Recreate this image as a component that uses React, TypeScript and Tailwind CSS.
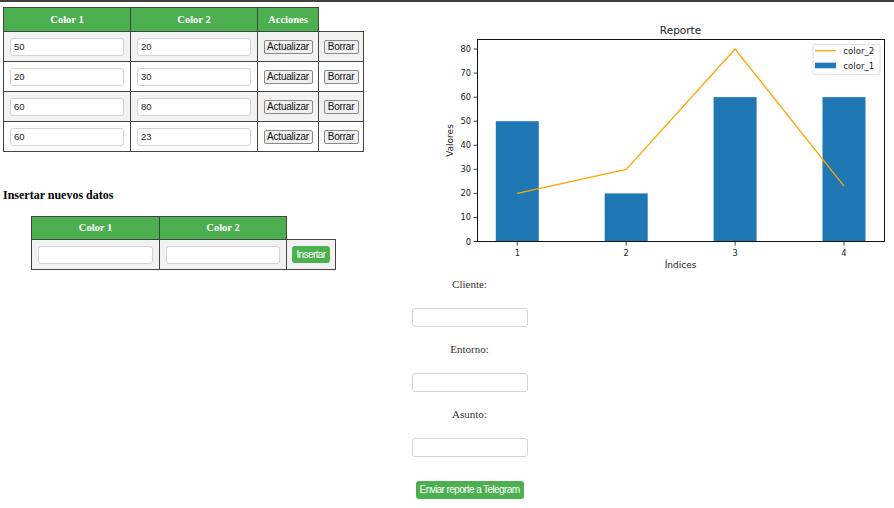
import React from "react"

const rows = [
  { c1: "50", c2: "20" },
  { c1: "20", c2: "30" },
  { c1: "60", c2: "80" },
  { c1: "60", c2: "23" },
]

const c1 = [50, 20, 60, 60]
const c2 = [20, 30, 80, 23]

const yv = (v: number) => 241.5 - v * 2.406
const xi = (i: number) => 517.3 + (i - 1) * 108.9

function Chart() {
  const ticks = [0, 10, 20, 30, 40, 50, 60, 70, 80]
  const linePts = c2.map((v, i) => `${xi(i + 1)},${yv(v)}`).join(" ")
  return (
    <svg width={494} height={274} viewBox="400 2 494 274" className="block font-['DejaVu_Sans',sans-serif]">
      <rect x={477.5} y={39.5} width={407} height={202} fill="#fff" />
      {c1.map((v, i) => (
        <rect key={i} x={xi(i + 1) - 21.5} y={yv(v)} width={43} height={241.5 - yv(v)} fill="#1f77b4" />
      ))}
      <polyline points={linePts} fill="none" stroke="#ffa500" strokeWidth={1.3} />
      <rect x={477.5} y={39.5} width={407} height={202} fill="none" stroke="#111" strokeWidth={1} />
      {ticks.map((t) => (
        <g key={t}>
          <line x1={473.5} x2={477.5} y1={yv(t)} y2={yv(t)} stroke="#111" strokeWidth={0.8} />
          <text x={471} y={yv(t)} textAnchor="end" dominantBaseline="central" fontSize={8.3} fill="#222">
            {t}
          </text>
        </g>
      ))}
      {[1, 2, 3, 4].map((i) => (
        <g key={i}>
          <line x1={xi(i)} x2={xi(i)} y1={241.5} y2={245.5} stroke="#111" strokeWidth={0.8} />
          <text x={xi(i)} y={252.5} textAnchor="middle" dominantBaseline="central" fontSize={8.3} fill="#222">
            {i}
          </text>
        </g>
      ))}
      <text x={680.5} y={30} textAnchor="middle" dominantBaseline="central" fontSize={10.5} fill="#222">
        Reporte
      </text>
      <text x={680.5} y={264.5} textAnchor="middle" dominantBaseline="central" fontSize={9} fill="#222">
        Índices
      </text>
      <text
        x={449.5}
        y={140.5}
        textAnchor="middle"
        dominantBaseline="central"
        fontSize={9}
        fill="#222"
        transform="rotate(-90 449.5 140.5)"
      >
        Valores
      </text>
      {/* legend */}
      <rect x={813} y={44.3} width={67} height={30} rx={2} fill="#fff" fillOpacity={0.8} stroke="#d5d5d5" strokeWidth={0.8} />
      <line x1={815} x2={836} y1={50.7} y2={50.7} stroke="#ffa500" strokeWidth={1.3} />
      <text x={843.3} y={50.7} dominantBaseline="central" fontSize={8.6} fill="#222">
        color_2
      </text>
      <rect x={815} y={62.7} width={21} height={5.6} fill="#1f77b4" />
      <text x={843.3} y={65.5} dominantBaseline="central" fontSize={8.6} fill="#222">
        color_1
      </text>
    </svg>
  )
}

export default function App() {
  return (
    <div className="w-[894px] h-[508px] bg-white overflow-hidden font-['Liberation_Sans',Arial,sans-serif]">
      <div className="h-[2px] bg-[#404040]" />
      <div className="flex">
        {/* left column */}
        <div className="w-[400px]">
          <table className="ml-[3px] mt-[5px] border-collapse table-fixed w-[360px]">
            <colgroup>
              <col className="w-[127px]" />
              <col className="w-[127px]" />
              <col className="w-[61px]" />
              <col className="w-[45px]" />
            </colgroup>
            <thead>
              <tr>
                <th className="h-[24px] p-0 bg-[#4caf50] border border-[#444] text-white text-[10.5px] font-bold font-['Liberation_Serif',serif]">
                  Color 1
                </th>
                <th className="h-[24px] p-0 bg-[#4caf50] border border-[#444] text-white text-[10.5px] font-bold font-['Liberation_Serif',serif]">
                  Color 2
                </th>
                <th className="h-[24px] p-0 bg-[#4caf50] border border-[#444] text-white text-[10.5px] font-bold font-['Liberation_Serif',serif]">
                  Acciones
                </th>
              </tr>
            </thead>
            <tbody>
              {rows.map((r, i) => (
                <tr key={i} className={i % 2 === 0 ? "bg-[#f2f2f2]" : "bg-white"}>
                  <td className="h-[30px] p-0 px-[6px] border border-[#444]">
                    <input
                      defaultValue={r.c1}
                      className="block w-full h-[18px] px-[3px] bg-white border border-[#d4d4d4] rounded-[3px] text-[9.5px] text-[#222] outline-none"
                    />
                  </td>
                  <td className="h-[30px] p-0 px-[6px] border border-[#444]">
                    <input
                      defaultValue={r.c2}
                      className="block w-full h-[18px] px-[3px] bg-white border border-[#d4d4d4] rounded-[3px] text-[9.5px] text-[#222] outline-none"
                    />
                  </td>
                  <td className="h-[30px] p-0 border border-[#444]">
                    <button className="block mx-auto h-[14px] w-[49px] bg-[#efefef] border border-[#8a8a8a] rounded-[2px] text-[10px] leading-[12px] tracking-[-0.2px] text-[#111]">
                      Actualizar
                    </button>
                  </td>
                  <td className="h-[30px] p-0 border border-[#444]">
                    <button className="block mx-auto h-[14px] w-[35px] bg-[#efefef] border border-[#8a8a8a] rounded-[2px] text-[10px] leading-[12px] tracking-[-0.2px] text-[#111]">
                      Borrar
                    </button>
                  </td>
                </tr>
              ))}
            </tbody>
          </table>

          <h3 className="ml-[3px] mt-[36px] text-[12px] leading-[15px] font-bold text-black font-['Liberation_Serif',serif]">
            Insertar nuevos datos
          </h3>

          <table className="ml-[31px] mt-[13px] border-collapse table-fixed w-[304px]">
            <colgroup>
              <col className="w-[128px]" />
              <col className="w-[127px]" />
              <col className="w-[49px]" />
            </colgroup>
            <thead>
              <tr>
                <th className="h-[23px] p-0 bg-[#4caf50] border border-[#444] text-white text-[10.5px] font-bold font-['Liberation_Serif',serif]">
                  Color 1
                </th>
                <th className="h-[23px] p-0 bg-[#4caf50] border border-[#444] text-white text-[10.5px] font-bold font-['Liberation_Serif',serif]">
                  Color 2
                </th>
              </tr>
            </thead>
            <tbody>
              <tr className="bg-[#f2f2f2]">
                <td className="h-[30px] p-0 px-[6px] border border-[#444]">
                  <input className="block w-full h-[18px] bg-white border border-[#d4d4d4] rounded-[3px] outline-none" />
                </td>
                <td className="h-[30px] p-0 px-[6px] border border-[#444]">
                  <input className="block w-full h-[18px] bg-white border border-[#d4d4d4] rounded-[3px] outline-none" />
                </td>
                <td className="h-[30px] p-0 border border-[#444]">
                  <button className="block mx-auto h-[17px] w-[38px] bg-[#4caf50] rounded-[3px] text-white text-[10px] tracking-[-0.6px]">
                    Insertar
                  </button>
                </td>
              </tr>
            </tbody>
          </table>
        </div>

        {/* right column */}
        <div className="w-[494px]">
          <Chart />
          <div className="ml-[11.5px] w-[116px] flex flex-col items-center font-['Liberation_Serif',serif]">
            <span className="mt-[1.5px] text-[11px] leading-[13px] font-normal text-[#333]">Cliente:</span>
            <input className="mt-[17px] w-full h-[19px] bg-white border border-[#d4d4d4] rounded-[3px] outline-none" />
            <span className="mt-[16px] text-[11px] leading-[13px] font-normal text-[#333]">Entorno:</span>
            <input className="mt-[17px] w-full h-[19px] bg-white border border-[#d4d4d4] rounded-[3px] outline-none" />
            <span className="mt-[16px] text-[11px] leading-[13px] font-normal text-[#333]">Asunto:</span>
            <input className="mt-[17px] w-full h-[19px] bg-white border border-[#d4d4d4] rounded-[3px] outline-none" />
            <button className="mt-[24px] w-[108px] h-[18px] bg-[#4caf50] rounded-[3px] text-white text-[10px] tracking-[-0.6px] font-['Liberation_Sans',Arial,sans-serif]">
              Enviar reporte a Telegram
            </button>
          </div>
        </div>
      </div>
    </div>
  )
}
